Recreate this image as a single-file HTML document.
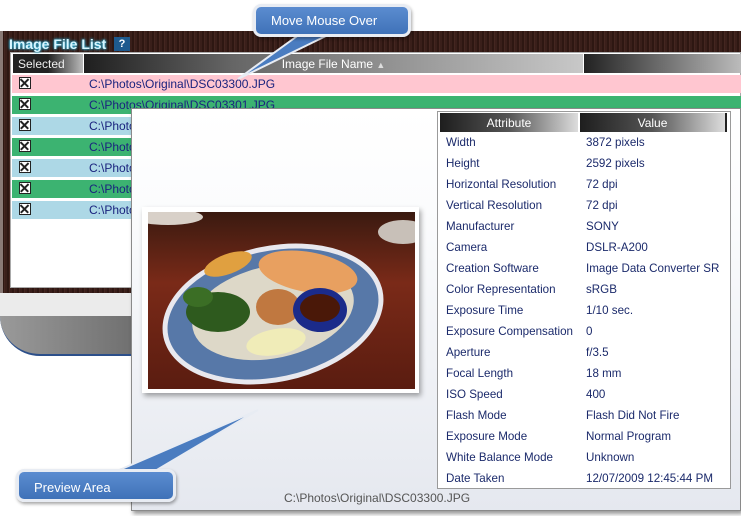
<!DOCTYPE html>
<html><head><style>
*{margin:0;padding:0;box-sizing:border-box}
body{width:741px;height:516px;overflow:hidden;background:#fff;font-family:"Liberation Sans",sans-serif;font-size:12px;position:relative}
.a{position:absolute}
.row{position:absolute;left:12px;width:729px;height:18px}
.row .cb{position:absolute;left:7px;top:2px;width:12px;height:12px;border:1.5px solid #222;background:#fff}
.row .cb:before,.row .cb:after{content:"";position:absolute;left:-1px;top:3.5px;width:11px;height:1.5px;background:#222;transform:rotate(45deg)}
.row .cb:after{transform:rotate(-45deg)}
.row span{position:absolute;left:77px;top:2px;color:#1a237e}
.t{position:absolute;left:8px;color:#1b2a6b}
.v{position:absolute;left:148px;color:#1b2a6b}
.callout{position:absolute;background:linear-gradient(#5b8cd0,#3f72b8);color:#fff;border:3px solid #e8ecf3;border-radius:8px;box-shadow:1px 2px 3px rgba(0,0,0,.35);font-size:13px}
</style></head><body>
<div class="a" style="left:0;top:31px;width:741px;height:262px;background:repeating-linear-gradient(90deg,#3a1f1a 0 2px,#2e1712 2px 4px,#442620 4px 5px);"></div>
<div class="a" style="left:0;top:31px;width:3px;height:262px;background:#8a7a76"></div>
<div class="a" style="left:10px;top:52px;width:731px;height:236px;background:#fff;border:1px solid #aaa"></div>
<div class="a" style="left:0;top:293px;width:741px;height:23px;background:#ebebeb"></div>
<div class="a" style="left:0;top:316px;width:741px;height:40px;background:linear-gradient(90deg,#9a9a9a,#3c3c3c 40%,#2a2a2a);border-bottom-left-radius:40px;border-bottom:2px solid #2c4f8a"></div>
<div class="a" style="left:9px;top:36px;font-weight:bold;font-size:14px;color:#d8f6ff;text-shadow:0 0 3px #2bb0d8,0 0 2px #2bb0d8">Image File List</div>
<div class="a" style="left:114px;top:37px;width:16px;height:14px;background:#1e5a8e;color:#fff;font-weight:bold;font-size:11px;text-align:center;line-height:14px">?</div>
<div class="a" style="left:13px;top:54px;width:70px;height:19px;background:linear-gradient(90deg,#222 50%,#bbb);color:#eee;padding:3px 5px">Selected</div>
<div class="a" style="left:84px;top:54px;width:499px;height:19px;background:linear-gradient(90deg,#1f1f1f,#666 30%,#c8c8c8);color:#fff;text-align:center;padding-top:3px">Image File Name <span style="color:#ddd;font-size:9px">▲</span></div>
<div class="a" style="left:584px;top:54px;width:157px;height:19px;background:linear-gradient(90deg,#222,#bbb)"></div>
<div class="row" style="top:75px;background:#ffc6d0"><div class="cb"></div><span>C:\Photos\Original\DSC03300.JPG</span></div>
<div class="row" style="top:96px;background:#3cb371"><div class="cb"></div><span>C:\Photos\Original\DSC03301.JPG</span></div>
<div class="row" style="top:117px;background:#add8e6"><div class="cb"></div><span>C:\Photos</span></div>
<div class="row" style="top:138px;background:#3cb371"><div class="cb"></div><span>C:\Photos</span></div>
<div class="row" style="top:159px;background:#add8e6"><div class="cb"></div><span>C:\Photos</span></div>
<div class="row" style="top:180px;background:#3cb371"><div class="cb"></div><span>C:\Photos</span></div>
<div class="row" style="top:201px;background:#add8e6"><div class="cb"></div><span>C:\Photos</span></div>
<div class="a" style="left:131px;top:108px;width:610px;height:403px;background:linear-gradient(#fff,#fbfcfd 25%,#e5e8ef);border:1px solid #8a8a8a;box-shadow:2px 3px 4px rgba(0,0,0,.4)"></div>
<div class="a" style="left:142px;top:207px;width:277px;height:186px;background:#fff;box-shadow:2px 3px 5px rgba(0,0,0,.35)"></div>
<svg class="a" style="left:148px;top:212px" width="267" height="177" viewBox="0 0 267 177">
<defs><linearGradient id="w" x1="0" y1="0" x2="0" y2="1"><stop offset="0" stop-color="#3a1a10"/><stop offset=".4" stop-color="#7a2a18"/><stop offset="1" stop-color="#5a1c10"/></linearGradient></defs>
<rect width="267" height="177" fill="url(#w)"/>
<ellipse cx="20" cy="5" rx="35" ry="8" fill="#d8d0c8"/>
<ellipse cx="255" cy="20" rx="25" ry="12" fill="#c8c0b8"/>
<ellipse cx="125" cy="102" rx="112" ry="68" transform="rotate(-12 125 102)" fill="#e8e8ee"/>
<ellipse cx="125" cy="102" rx="107" ry="63" transform="rotate(-12 125 102)" fill="#5778a8"/>
<ellipse cx="125" cy="100" rx="82" ry="46" transform="rotate(-12 125 100)" fill="#ddd8c8"/>
<ellipse cx="160" cy="60" rx="50" ry="20" transform="rotate(10 160 60)" fill="#e8a060"/>
<ellipse cx="80" cy="52" rx="25" ry="10" transform="rotate(-20 80 52)" fill="#e0a040"/>
<ellipse cx="130" cy="95" rx="22" ry="18" fill="#c07840"/>
<ellipse cx="70" cy="100" rx="32" ry="20" fill="#2e5a1e"/>
<ellipse cx="50" cy="85" rx="15" ry="10" fill="#3b6e25"/>
<ellipse cx="172" cy="98" rx="27" ry="22" fill="#1b2b8a"/>
<ellipse cx="172" cy="96" rx="20" ry="14" fill="#4a1808"/>
<ellipse cx="128" cy="130" rx="30" ry="13" transform="rotate(-10 128 130)" fill="#f0ecb8"/>
</svg>
<div class="a" style="left:437px;top:111px;width:294px;height:378px;background:#fff;border:1px solid #9a9a9a"></div>
<div class="a" style="left:440px;top:113px;width:138px;height:19px;background:linear-gradient(90deg,#1e1e1e,#555 50%,#ddd);color:#fff;text-align:center;padding-top:3px">Attribute</div>
<div class="a" style="left:580px;top:113px;width:147px;height:19px;background:linear-gradient(90deg,#1e1e1e,#555 50%,#ddd);color:#fff;text-align:center;padding-top:3px;border-right:2px solid #222">Value</div>
<div class="a" style="left:438px;top:132px;width:290px;font-size:11.6px;line-height:21px">
<div style="position:relative;height:378px">
<div class="t" style="top:0">Width</div><div class="v" style="top:0">3872 pixels</div>
<div class="t" style="top:21px">Height</div><div class="v" style="top:21px">2592 pixels</div>
<div class="t" style="top:42px">Horizontal Resolution</div><div class="v" style="top:42px">72 dpi</div>
<div class="t" style="top:63px">Vertical Resolution</div><div class="v" style="top:63px">72 dpi</div>
<div class="t" style="top:84px">Manufacturer</div><div class="v" style="top:84px">SONY</div>
<div class="t" style="top:105px">Camera</div><div class="v" style="top:105px">DSLR-A200</div>
<div class="t" style="top:126px">Creation Software</div><div class="v" style="top:126px">Image Data Converter SR</div>
<div class="t" style="top:147px">Color Representation</div><div class="v" style="top:147px">sRGB</div>
<div class="t" style="top:168px">Exposure Time</div><div class="v" style="top:168px">1/10 sec.</div>
<div class="t" style="top:189px">Exposure Compensation</div><div class="v" style="top:189px">0</div>
<div class="t" style="top:210px">Aperture</div><div class="v" style="top:210px">f/3.5</div>
<div class="t" style="top:231px">Focal Length</div><div class="v" style="top:231px">18 mm</div>
<div class="t" style="top:252px">ISO Speed</div><div class="v" style="top:252px">400</div>
<div class="t" style="top:273px">Flash Mode</div><div class="v" style="top:273px">Flash Did Not Fire</div>
<div class="t" style="top:294px">Exposure Mode</div><div class="v" style="top:294px">Normal Program</div>
<div class="t" style="top:315px">White Balance Mode</div><div class="v" style="top:315px">Unknown</div>
<div class="t" style="top:336px">Date Taken</div><div class="v" style="top:336px">12/07/2009 12:45:44 PM</div>
</div></div>
<div class="a" style="left:284px;top:491px;color:#555">C:\Photos\Original\DSC03300.JPG</div>
<svg class="a" style="left:0;top:0" width="741" height="516">
<polygon points="300,34 238,79 330,34" fill="#4a7cc0" stroke="#e8ecf3" stroke-width="2"/>
<polygon points="110,474 258,410 150,474" fill="#4a7cc0" stroke="#e8ecf3" stroke-width="2"/>
</svg>
<div class="callout" style="left:253px;top:4px;width:158px;height:33px;padding:6px 0 0 15px">Move Mouse Over</div>
<div class="callout" style="left:16px;top:469px;width:160px;height:33px;padding:8px 0 0 15px">Preview Area</div>
</body></html>
